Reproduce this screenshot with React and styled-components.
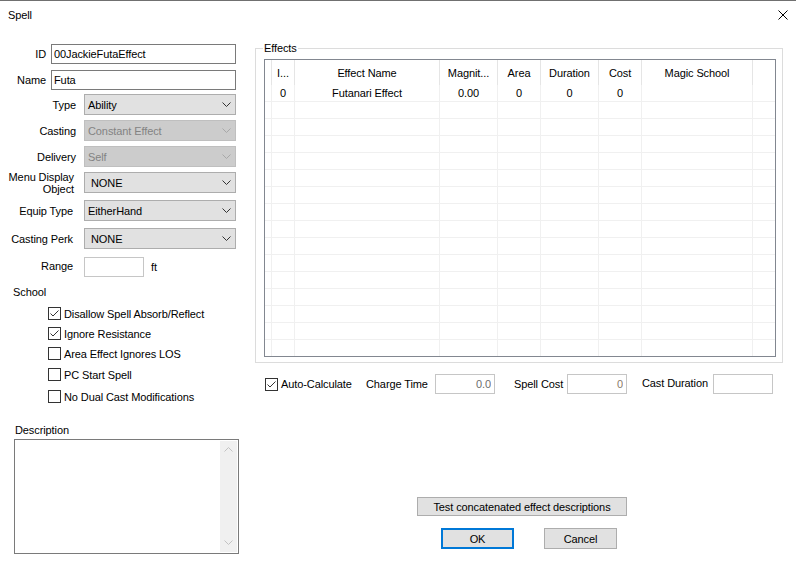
import React from 'react';
import styled, { createGlobalStyle } from 'styled-components';

const Global = createGlobalStyle`
  html, body { margin: 0; padding: 0; background: #fff; }
  body { font-family: "Liberation Sans", Arial, sans-serif; font-size: 11px; color: #000; }
  * { box-sizing: border-box; }
`;

const Window = styled.div`
  width: 796px;
  height: 575px;
  background: #fff;
  border-top: 1px solid #707070;
  display: flex;
  flex-direction: column;
  overflow: hidden;
  letter-spacing: -0.1px;
`;

const TitleBar = styled.div`
  height: 28px;
  flex-shrink: 0;
  display: flex;
  align-items: center;
  justify-content: space-between;
  padding: 0 8px;
  margin-bottom: 1px;
`;

const Title = styled.span`
  font-size: 11px;
`;

const Body = styled.div`
  display: flex;
  flex: 1;
`;

const LeftCol = styled.div`
  width: 240px;
  flex-shrink: 0;
  display: flex;
  flex-direction: column;
`;

const RightCol = styled.div`
  width: 528px;
  margin-left: 15px;
  display: flex;
  flex-direction: column;
`;

const Row = styled.div`
  display: flex;
  align-items: center;
  margin-top: ${p => p.$mt}px;
  ${p => (p.$h ? `height: ${p.$h}px;` : '')}
`;

const Label = styled.div`
  width: ${p => p.$w}px;
  padding-right: ${p => p.$pr}px;
  padding-bottom: ${p => p.$raise || 0}px;
  text-align: right;
  line-height: 12px;
  flex-shrink: 0;
  white-space: nowrap;
`;

const TextInput = styled.input`
  width: ${p => p.$w}px;
  height: 20px;
  border: 1px solid ${p => (p.$light ? '#c6c6c6' : '#7a7a7a')};
  background: #fff;
  padding: 0 ${p => (p.$right ? 3 : 2)}px;
  font: inherit;
  letter-spacing: inherit;
  color: ${p => p.$color || '#000'};
  text-align: ${p => (p.$right ? 'right' : 'left')};
  outline: none;
  margin: 0;
`;

const Combo = styled.div`
  width: 152px;
  height: 21px;
  display: flex;
  align-items: center;
  justify-content: space-between;
  padding: 0 4px 0 ${p => p.$pl}px;
  background: ${p => (p.$disabled ? '#cccccc' : '#e1e1e1')};
  border: 1px solid ${p => (p.$disabled ? '#bfbfbf' : '#adadad')};
  color: ${p => (p.$disabled ? '#838383' : '#000')};
`;

const Unit = styled.span`
  margin-left: 7px;
`;

const SectionTitle = styled.div`
  margin-top: ${p => p.$mt}px;
  padding-left: ${p => p.$pl}px;
  line-height: 14px;
`;

const CheckRow = styled.label`
  display: flex;
  align-items: center;
  height: 13px;
  margin-top: ${p => p.$mt || 0}px;
  margin-left: ${p => p.$ml || 0}px;
`;

const Box = styled.span`
  width: 13px;
  height: 13px;
  border: 1px solid #333;
  background: #fff;
  flex-shrink: 0;
  display: flex;
`;

const CheckText = styled.span`
  margin-left: 3px;
  white-space: nowrap;
  width: ${p => (p.$w ? `${p.$w}px` : 'auto')};
`;

const DescBox = styled.div`
  margin: 2px 0 0 14px;
  width: 225px;
  height: 115px;
  border: 1px solid #7a7a7a;
  background: #fff;
  display: flex;
  justify-content: flex-end;
  padding: 1px;
`;

const ScrollTrack = styled.div`
  width: 17px;
  background: #f0f0f0;
  display: flex;
  flex-direction: column;
  justify-content: space-between;
  align-items: center;
  padding: 6px 0 7px;
`;

const Group = styled.fieldset`
  margin: 12px 0 0 0;
  padding: 4px 6px 5px 8px;
  border: 1px solid #dcdcdc;
  min-width: 0;
`;

const Legend = styled.legend`
  padding: 0 1px;
  margin-left: -1px;
  line-height: 13px;
`;

const Table = styled.div`
  height: 298px;
  border: 1px solid #828790;
  background: #fff;
  overflow: hidden;
`;

const COLS = '7px 23px 145px 58px 43px 58px 43px 111px 1fr';

const HeadRow = styled.div`
  display: grid;
  grid-template-columns: ${COLS};
  height: 25px;
`;

const HeadCell = styled.div`
  display: flex;
  align-items: center;
  justify-content: center;
  border-right: ${p => (p.$last ? 'none' : '1px solid #e5e5e5')};
  white-space: nowrap;
  overflow: hidden;
`;

const BodyRow = styled.div`
  display: grid;
  grid-template-columns: ${COLS};
  height: 17px;
  border-bottom: 1px solid #f0f0f0;
`;

const Cell = styled.div`
  display: flex;
  align-items: center;
  justify-content: center;
  border-right: ${p => (p.$last ? 'none' : '1px solid #f0f0f0')};
  white-space: nowrap;
  overflow: hidden;
`;

const BottomRow = styled.div`
  display: flex;
  align-items: center;
  height: 20px;
  margin-top: 11px;
  padding-left: 10px;
`;

const FieldLabel = styled.span`
  width: ${p => p.$w}px;
  margin-left: ${p => p.$ml || 0}px;
  padding-bottom: ${p => p.$raise || 0}px;
  white-space: nowrap;
  flex-shrink: 0;
`;

const Button = styled.button`
  width: ${p => p.$w}px;
  height: ${p => p.$h}px;
  margin: 0;
  padding: 0;
  background: #e1e1e1;
  border: ${p => (p.$primary ? '2px solid #0078d7' : '1px solid #adadad')};
  font: inherit;
  letter-spacing: inherit;
  color: #000;
  cursor: default;
`;

const TestWrap = styled.div`
  margin: 103px 0 0 162px;
`;

const ButtonRow = styled.div`
  display: flex;
  gap: 30px;
  margin: 12px 0 0 186px;
`;

const Chevron = ({ color = '#333', up = false }) => (
  <svg width="9" height="5" viewBox="0 0 9 5" style={{ display: 'block' }}>
    <path
      d={up ? 'M0.5 4.5 L4.5 0.5 L8.5 4.5' : 'M0.5 0.5 L4.5 4.5 L8.5 0.5'}
      stroke={color}
      strokeWidth="1"
      fill="none"
    />
  </svg>
);

const Check = ({ checked, ml, mt, children, w }) => (
  <CheckRow $ml={ml} $mt={mt}>
    <Box>
      {checked && (
        <svg width="11" height="11" viewBox="0 0 11 11">
          <polyline points="1.5,5.5 4,8 9.5,2.5" stroke="#333" strokeWidth="1" fill="none" />
        </svg>
      )}
    </Box>
    <CheckText $w={w}>{children}</CheckText>
  </CheckRow>
);

const SelectField = ({ label, value, mt, pr = 8, pl = 3, disabled, h, lines }) => (
  <Row $mt={mt} $h={h}>
    <Label $w={84} $pr={pr}>
      {lines ? lines.map((l, i) => <div key={i}>{l}</div>) : label}
    </Label>
    <Combo $disabled={disabled} $pl={pl}>
      <span>{value}</span>
      <Chevron color={disabled ? '#a8a8a8' : '#333'} />
    </Combo>
  </Row>
);

const headers = ['', 'I...', 'Effect Name', 'Magnit...', 'Area', 'Duration', 'Cost', 'Magic School', ''];
const firstRow = ['', '0', 'Futanari Effect', '0.00', '0', '0', '0', '', ''];

export default function App() {
  const rows = Array.from({ length: 16 }, (_, i) => (i === 0 ? firstRow : Array(9).fill('')));
  return (
    <>
      <Global />
      <Window>
        <TitleBar>
          <Title>Spell</Title>
          <svg width="10" height="10" viewBox="0 0 10 10">
            <path d="M0.5 0.5 L9.5 9.5 M9.5 0.5 L0.5 9.5" stroke="#000" strokeWidth="1" />
          </svg>
        </TitleBar>
        <Body>
          <LeftCol>
            <Row $mt={14}>
              <Label $w={51} $pr={5}>ID</Label>
              <TextInput $w={185} defaultValue="00JackieFutaEffect" readOnly />
            </Row>
            <Row $mt={6}>
              <Label $w={51} $pr={5}>Name</Label>
              <TextInput $w={185} defaultValue="Futa" readOnly />
            </Row>
            <SelectField label="Type" value="Ability" mt={4} />
            <SelectField label="Casting" value="Constant Effect" mt={5} disabled />
            <SelectField label="Delivery" value="Self" mt={5} disabled />
            <SelectField lines={['Menu Display', 'Object']} value="NONE" mt={5} h={21} pr={10} pl={6} />
            <SelectField label="Equip Type" value="EitherHand" mt={7} pr={11} />
            <SelectField label="Casting Perk" value="NONE" mt={7} pr={11} pl={6} />
            <Row $mt={8}>
              <Label $w={84} $pr={11} $raise={2}>Range</Label>
              <TextInput $w={60} $light readOnly />
              <Unit>ft</Unit>
            </Row>
            <SectionTitle $mt={8} $pl={13}>School</SectionTitle>
            <Check ml={48} mt={8} checked>Disallow Spell Absorb/Reflect</Check>
            <Check ml={48} mt={7} checked>Ignore Resistance</Check>
            <Check ml={48} mt={7}>Area Effect Ignores LOS</Check>
            <Check ml={48} mt={8}>PC Start Spell</Check>
            <Check ml={48} mt={9}>No Dual Cast Modifications</Check>
            <SectionTitle $mt={20} $pl={15}>Description</SectionTitle>
            <DescBox>
              <ScrollTrack>
                <Chevron color="#c2c2c2" up />
                <Chevron color="#c2c2c2" />
              </ScrollTrack>
            </DescBox>
          </LeftCol>
          <RightCol>
            <Group>
              <Legend>Effects</Legend>
              <Table>
                <HeadRow>
                  {headers.map((h, i) => (
                    <HeadCell key={i} $last={i === headers.length - 1}>{h}</HeadCell>
                  ))}
                </HeadRow>
                {rows.map((r, ri) => (
                  <BodyRow key={ri}>
                    {r.map((c, ci) => (
                      <Cell key={ci} $last={ci === r.length - 1}>{c}</Cell>
                    ))}
                  </BodyRow>
                ))}
              </Table>
            </Group>
            <BottomRow>
              <Check checked w={85}>Auto-Calculate</Check>
              <FieldLabel $w={69}>Charge Time</FieldLabel>
              <TextInput $w={60} $light $right $color="#6d6d6d" defaultValue="0.0" readOnly />
              <FieldLabel $w={53} $ml={19}>Spell Cost</FieldLabel>
              <TextInput $w={60} $light $right $color="#8a7a6a" defaultValue="0" readOnly />
              <FieldLabel $w={71} $ml={15} $raise={3}>Cast Duration</FieldLabel>
              <TextInput $w={60} $light readOnly />
            </BottomRow>
            <TestWrap>
              <Button $w={210} $h={19}>Test concatenated effect descriptions</Button>
            </TestWrap>
            <ButtonRow>
              <Button $w={73} $h={21} $primary>OK</Button>
              <Button $w={73} $h={21}>Cancel</Button>
            </ButtonRow>
          </RightCol>
        </Body>
      </Window>
    </>
  );
}
